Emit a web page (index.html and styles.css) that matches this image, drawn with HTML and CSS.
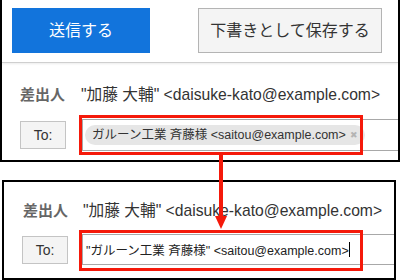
FILE: index.html
```html
<!DOCTYPE html>
<html lang="ja">
<head>
  <meta charset="UTF-8">
  <title>宛先の入力</title>
  <link rel="stylesheet" href="styles.css">
</head>
<body>

  <!-- Before: address picked as a chip -->
  <div class="shot shot-before">
    <div class="toolbar">
      <button class="btn btn-send">送信する</button>
      <button class="btn btn-draft">下書きとして保存する</button>
    </div>

    <div class="row row-from">
      <span class="label">差出人</span>
      <span class="value">"加藤 大輔" &lt;daisuke-kato@example.com&gt;</span>
    </div>

    <div class="row row-to">
      <button class="btn-to">To:</button>
      <div class="to-field">
        <span class="chip">ガルーン工業 斉藤様 &lt;saitou@example.com&gt;<span class="chip-x">✖</span></span>
      </div>
    </div>

    <div class="mark"></div>
  </div>

  <!-- After: address typed as plain text -->
  <div class="shot shot-after">
    <div class="row row-from">
      <span class="label">差出人</span>
      <span class="value">"加藤 大輔" &lt;daisuke-kato@example.com&gt;</span>
    </div>

    <div class="row row-to">
      <button class="btn-to">To:</button>
      <div class="to-field">
        <span class="typed">"ガルーン工業 斉藤様" &lt;saitou@example.com&gt;</span><span class="caret"></span>
      </div>
    </div>

    <div class="mark"></div>
  </div>

  <div class="arrow">
    <div class="arrow-line"></div>
    <div class="arrow-head"></div>
  </div>

</body>
</html>
```

FILE: styles.css
```css
body {
  margin: 0;
  width: 400px;
  height: 280px;
  overflow: hidden;
  position: relative;
  background: white;
  font-family: "Liberation Sans", "Noto Sans CJK JP", sans-serif;
  color: #333;
}

button {
  font-family: inherit;
}

.shot {
  position: relative;
  box-sizing: border-box;
  border: 2px solid black;
  overflow: hidden;
  background: white;
}

.shot-before {
  width: 400px;
  height: 162px;
  border-top: none;
}

.shot-after {
  width: 394px;
  height: 100px;
  margin: 18px 0 0 2px;
}

/* toolbar */
.toolbar {
  display: flex;
  gap: 48px;
  padding: 8px 0 9px 10px;
  border-bottom: 1px solid #cfcfcf;
  box-shadow: 0 1px 2px rgba(0,0,0,0.08);
}

.btn {
  height: 45px;
  font-size: 16px;
  line-height: 20px;
  border-radius: 0;
  cursor: pointer;
}

.btn-send {
  width: 138px;
  background: #1274dc;
  color: white;
  border: none;
}

.btn-draft {
  width: 184px;
  background: #f4f4f4;
  color: #333;
  border: 1px solid #b4b4b4;
}

/* form rows */
.row {
  display: flex;
  align-items: center;
}

.row-from {
  padding: 22px 0 14px 18px;
  line-height: 20px;
}

.shot-after .row-from {
  padding: 19px 0 13px 19px;
}

.label {
  width: 61px;
  flex-shrink: 0;
  font-size: 15px;
  font-weight: bold;
  color: #666;
}

.shot-after .label {
  width: 60px;
}

.value {
  font-size: 15.7px;
  white-space: nowrap;
  color: #333;
}

.row-to {
  padding-left: 18px;
}

.btn-to {
  width: 46px;
  height: 28px;
  padding: 0;
  flex-shrink: 0;
  background: #f4f4f4;
  border: 1px solid #c4c4c4;
  font-size: 14px;
  color: #333;
}

.to-field {
  flex: 1;
  height: 32px;
  box-sizing: border-box;
  margin: 0 -6px 0 16px;
  padding-left: 2px;
  border: 1px solid #a8a8a8;
  display: flex;
  align-items: center;
  white-space: nowrap;
}

.shot-after .to-field {
  height: 31px;
  padding-left: 3px;
  margin-left: 14px;
}

.chip {
  height: 20px;
  line-height: 20px;
  padding: 0 7px 0 7px;
  border-radius: 10px;
  background: #e6e6e6;
  font-size: 12.5px;
  color: #333;
  display: flex;
  align-items: center;
}

.chip-x {
  margin-left: 4px;
  font-size: 9px;
  color: #b4b4b4;
}

.typed {
  font-size: 12.5px;
  color: #222;
}

.caret {
  width: 1px;
  height: 15px;
  background: black;
}

/* red highlight over the To field */
.mark {
  position: absolute;
  box-sizing: border-box;
  border: 3px solid #f5190a;
  width: 284px;
}

.shot-before .mark {
  left: 77px;
  top: 115px;
  height: 40px;
}

.shot-after .mark {
  left: 75px;
  top: 48px;
  height: 41px;
}

.arrow {
  position: absolute;
  left: 215px;
  top: 155px;
  width: 12px;
  display: flex;
  flex-direction: column;
  align-items: center;
}

.arrow-line {
  width: 4px;
  height: 61px;
  background: #f5190a;
}

.arrow-head {
  width: 0;
  height: 0;
  border-left: 6px solid transparent;
  border-right: 6px solid transparent;
  border-top: 13px solid #f5190a;
}
```
